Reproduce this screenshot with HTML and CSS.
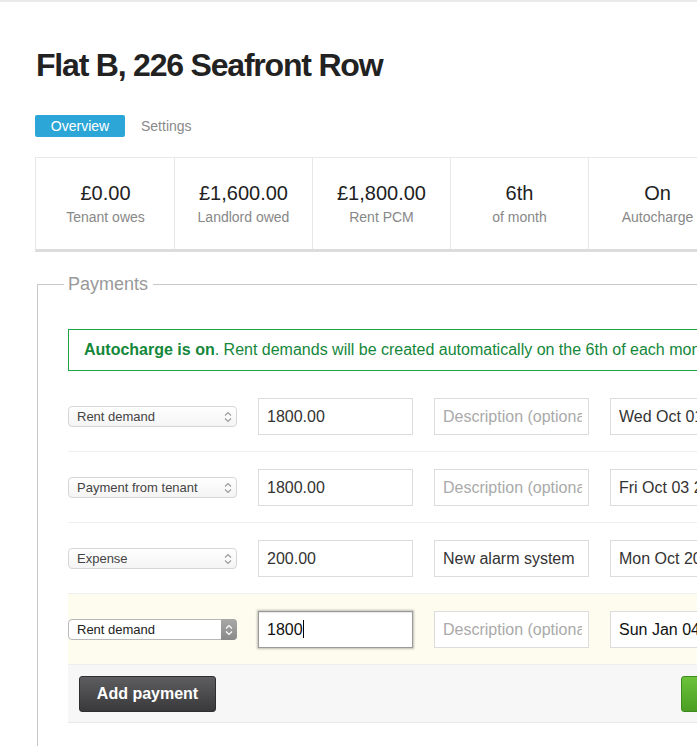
FILE: index.html
```html
<!DOCTYPE html>
<html>
<head>
<meta charset="utf-8">
<link rel="stylesheet" href="styles.css">
</head>
<body>
<div class="topbar"></div>
<div class="page">
  <h1 class="title">Flat B, 226 Seafront Row</h1>
  <nav class="tabs">
    <span class="tab tab-active">Overview</span>
    <span class="tab">Settings</span>
  </nav>
  <div class="stats">
    <div class="stat"><div class="stat-value">£0.00</div><div class="stat-label">Tenant owes</div></div>
    <div class="stat"><div class="stat-value">£1,600.00</div><div class="stat-label">Landlord owed</div></div>
    <div class="stat"><div class="stat-value">£1,800.00</div><div class="stat-label">Rent PCM</div></div>
    <div class="stat"><div class="stat-value">6th</div><div class="stat-label">of month</div></div>
    <div class="stat"><div class="stat-value">On</div><div class="stat-label">Autocharge</div></div>
    <div class="stat"><div class="stat-value">&nbsp;</div><div class="stat-label">&nbsp;</div></div>
  </div>
  <fieldset class="payments">
    <legend class="legend">Payments</legend>
    <div class="alert"><strong>Autocharge is on</strong>. Rent demands will be created automatically on the 6th of each month.</div>
    <div class="rows">
      <div class="row">
        <div class="select"><span>Rent demand</span><svg class="arrows" width="8" height="12" viewBox="0 0 8 12"><path d="M1 4.5 L4 1.5 L7 4.5 M1 7.5 L4 10.5 L7 7.5" fill="none" stroke="#9a9a9a" stroke-width="1.1"/></svg></div>
        <div class="field field-amount"><span class="field-text">1800.00</span></div>
        <div class="field field-desc placeholder"><span class="field-text">Description (optional)</span></div>
        <div class="field field-date"><span class="field-text">Wed Oct 01 2014</span></div>
      </div>
      <div class="row">
        <div class="select"><span>Payment from tenant</span><svg class="arrows" width="8" height="12" viewBox="0 0 8 12"><path d="M1 4.5 L4 1.5 L7 4.5 M1 7.5 L4 10.5 L7 7.5" fill="none" stroke="#9a9a9a" stroke-width="1.1"/></svg></div>
        <div class="field field-amount"><span class="field-text">1800.00</span></div>
        <div class="field field-desc placeholder"><span class="field-text">Description (optional)</span></div>
        <div class="field field-date"><span class="field-text">Fri Oct 03 2014</span></div>
      </div>
      <div class="row">
        <div class="select"><span>Expense</span><svg class="arrows" width="8" height="12" viewBox="0 0 8 12"><path d="M1 4.5 L4 1.5 L7 4.5 M1 7.5 L4 10.5 L7 7.5" fill="none" stroke="#9a9a9a" stroke-width="1.1"/></svg></div>
        <div class="field field-amount"><span class="field-text">200.00</span></div>
        <div class="field field-desc"><span class="field-text">New alarm system</span></div>
        <div class="field field-date"><span class="field-text">Mon Oct 20 2014</span></div>
      </div>
      <div class="row row-new">
        <div class="select select-focus"><span>Rent demand</span><span class="select-btn"><svg width="8" height="12" viewBox="0 0 8 12"><path d="M1 4.5 L4 1.5 L7 4.5 M1 7.5 L4 10.5 L7 7.5" fill="none" stroke="#ffffff" stroke-width="1.2"/></svg></span></div>
        <div class="field field-amount field-focus"><span class="field-text">1800<span class="caret"></span></span></div>
        <div class="field field-desc placeholder"><span class="field-text">Description (optional)</span></div>
        <div class="field field-date field-black"><span class="field-text">Sun Jan 04 2015</span></div>
      </div>
    </div>
    <div class="actions">
      <button class="btn btn-dark">Add payment</button>
      <button class="btn btn-green">Save payments</button>
    </div>
  </fieldset>
</div>
</body>
</html>
```
FILE: styles.css
```css
html, body {
  margin: 0;
  padding: 0;
  overflow: hidden;
  background: #fff;
  font-family: "Liberation Sans", Arial, Helvetica, sans-serif;
  color: #333;
}
.topbar {
  height: 2px;
  background: #e9e9e9;
}
.page {
  width: 1000px;
  padding-left: 35px;
}
.title {
  margin: 47px 0 0 1px;
  font-size: 32px;
  line-height: 32px;
  font-weight: bold;
  color: #222;
  letter-spacing: -1.2px;
}
.tabs {
  display: flex;
  align-items: center;
  gap: 16px;
  margin-top: 34px;
  height: 22px;
}
.tab {
  font-size: 14px;
  color: #8a8a8a;
  line-height: 22px;
}
.tab-active {
  background: #2ba6d6;
  color: #fff;
  width: 90px;
  text-align: center;
  border-radius: 2px;
}
.stats {
  display: flex;
  margin-top: 20px;
  padding-left: 1px;
  border: 1px solid #e8e8e8;
  border-bottom: 3px solid #dcdcdc;
  width: 900px;
}
.stat {
  width: 137px;
  flex: none;
  border-right: 1px solid #e8e8e8;
  text-align: center;
  padding: 23px 0 23px;
  height: 45px;
}
.stat-value {
  font-size: 20px;
  line-height: 24px;
  color: #222;
}
.stat-label {
  font-size: 14px;
  line-height: 18px;
  margin-top: 3px;
  color: #888;
}
.payments {
  margin: 22px 0 0 2px;
  padding: 34px 0 0 30px;
  border: 1px solid #c8c8c8;
  border-right: none;
  border-bottom: none;
  width: 960px;
  min-height: 480px;
}
.legend {
  margin-left: -4px;
  padding: 0 5px 0 4px;
  font-size: 18px;
  color: #999;
}
.alert {
  border: 1px solid #21a444;
  color: #14873a;
  font-size: 16px;
  line-height: 20px;
  padding: 10px 15px;
  white-space: nowrap;
}
.alert strong {
  font-weight: bold;
}
.rows {
  margin-top: 10px;
}
.row {
  display: flex;
  align-items: center;
  gap: 21px;
  padding: 17px 0 16px;
  border-bottom: 1px solid #eeeeee;
}
.row-new {
  background: #fdfcee;
}
.select {
  box-sizing: border-box;
  width: 169px;
  height: 21px;
  flex: none;
  display: flex;
  align-items: center;
  justify-content: space-between;
  padding: 0 0 0 8px;
  border: 1px solid #d6d6d6;
  border-radius: 4px;
  background: linear-gradient(#ffffff, #f4f4f4);
  font-size: 13px;
  color: #444;
}
.arrows {
  margin-right: 4px;
}
.select-focus {
  border-color: #b8b8b8;
  background: #fff;
  color: #222;
}
.select-btn {
  width: 16px;
  height: 21px;
  margin: -1px -1px -1px 0;
  border-radius: 0 4px 4px 0;
  background: linear-gradient(#a8a8a8, #8a8a8a);
  display: flex;
  align-items: center;
  justify-content: center;
}
.field {
  box-sizing: border-box;
  flex: none;
  height: 37px;
  border: 1px solid #dcdcdc;
  background: #fff;
  font-size: 16px;
  line-height: 35px;
  padding: 0 6px 0 8px;
  color: #333;
  white-space: nowrap;
}
.field-text {
  display: block;
  overflow: hidden;
}
.field-amount {
  width: 155px;
}
.field-desc {
  width: 155px;
}
.field-date {
  width: 170px;
}
.placeholder {
  color: #aaa;
}
.field-black {
  color: #111;
}
.field-focus {
  border: 1px solid #9a9a9a;
  box-shadow: 0 0 2px 1px rgba(0,0,0,0.25), inset 0 1px 1px rgba(0,0,0,0.1);
  color: #111;
}
.caret {
  display: inline-block;
  width: 1px;
  height: 18px;
  background: #000;
  vertical-align: -3px;
}
.actions {
  display: flex;
  align-items: center;
  justify-content: space-between;
  background: #f7f7f7;
  border-bottom: 1px solid #e8e8e8;
  padding: 11px 10px 10px 11px;
  width: 752px;
}
.btn {
  height: 36px;
  border-radius: 3px;
  font-family: "Liberation Sans", Arial, sans-serif;
  font-size: 16px;
  font-weight: bold;
  color: #fff;
  padding: 0;
  white-space: nowrap;
  border: 1px solid #2e2e30;
}
.btn-dark {
  width: 137px;
  background: linear-gradient(#5e5e61, #39393b);
}
.btn-green {
  background: linear-gradient(#6cc33a, #4a9e22);
  border-color: #3f8a1c;
  width: 150px;
}
```
